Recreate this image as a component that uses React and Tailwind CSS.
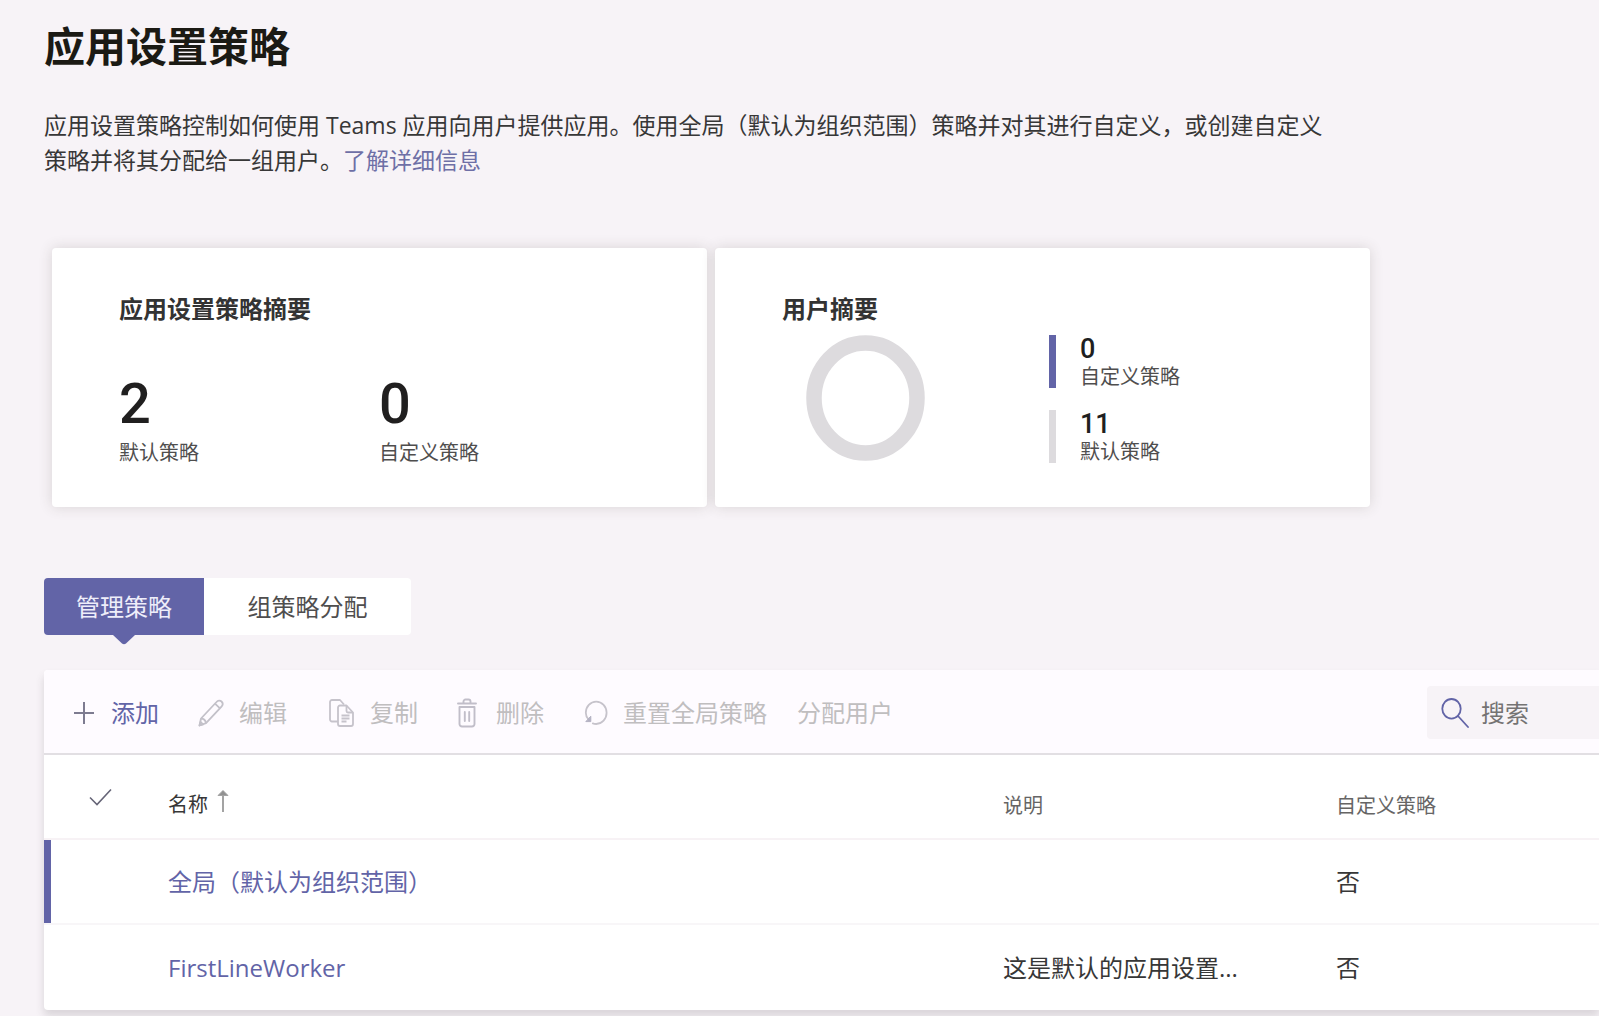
import React, { useState } from 'react';

const PencilIcon = () => (
  <svg width="26" height="28" viewBox="0 0 26 28" fill="none" stroke="#c3c1c9" strokeWidth="1.8" strokeLinejoin="round" aria-hidden="true">
    <path d="M1.5 26.5 3 19.5 18.5 3C20 1.3 22 1 23.5 2.5S25 6 23.5 7.6L8 24.2Z" />
    <path d="M3 19.5c2.6.2 4.6 2 5 4.7M17 4.6l5 4.7M1.5 26.5l1-3.6 2.6 2.6z" />
  </svg>
);

const CopyIcon = () => (
  <svg width="26" height="28" viewBox="0 0 26 28" fill="none" stroke="#c6c3cb" strokeWidth="1.8" strokeLinejoin="round" aria-hidden="true">
    <path d="M9 22.5H3a2 2 0 0 1-2-2V3a2 2 0 0 1 2-2h8l4 4.5" />
    <path d="M9 8.5a2 2 0 0 1 2-2h6.5l6.5 7V25a2 2 0 0 1-2 2H11a2 2 0 0 1-2-2Z" />
    <path d="M17.5 6.5V12a1.5 1.5 0 0 0 1.5 1.5h5M12.5 16.5h8M12.5 19.5h8M12.5 22.5h5" />
  </svg>
);

const TrashIcon = () => (
  <svg width="20" height="30" viewBox="0 0 20 30" fill="none" stroke="#c1bec9" strokeWidth="1.9" strokeLinecap="round" strokeLinejoin="round" aria-hidden="true">
    <path d="M1 5.5h18M6.5 5V3.5a2 2 0 0 1 2-2h3a2 2 0 0 1 2 2V5" />
    <path d="M2.5 9h15v17a2.5 2.5 0 0 1-2.5 2.5H5A2.5 2.5 0 0 1 2.5 26ZM7.8 14v9M12.2 14v9" />
  </svg>
);

const ResetIcon = () => (
  <svg width="24" height="28" viewBox="0 0 24 28" fill="none" stroke="#c6c3cb" strokeWidth="1.8" strokeLinecap="round" aria-hidden="true">
    <path d="M4.6 20.6C2.8 18.8 1.8 16.500 1.8 13.800 1.8 7.600 6.400 2.600 12.200 2.600S22.600 7.600 22.600 13.800 18 25 12.200 25c-1.200 0-2.400-.2-3.400-.6" />
    <path d="M2.200 22.600h4.600v-5Z" fill="#b3b1c2" stroke="#b3b1c2" strokeWidth="1" />
  </svg>
);

const PlusIcon = () => (
  <svg width="22" height="22" viewBox="0 0 22 22" fill="none" stroke="#7d7b90" strokeWidth="2" aria-hidden="true">
    <path d="M11 0v22M1 11h20" />
  </svg>
);

const SearchIcon = () => (
  <svg width="28" height="30" viewBox="0 0 28 30" fill="none" stroke="#6264a7" strokeWidth="1.8" strokeLinecap="round" aria-hidden="true">
    <ellipse cx="10.5" cy="10.8" rx="9.2" ry="9.8" />
    <path d="m17 18 10 11" />
  </svg>
);

const ACTIONS = [
  { label: '编辑', icon: PencilIcon, className: 'w-[89px] ml-[39px]' },
  { label: '复制', icon: CopyIcon, className: 'w-[89px] ml-[42px]' },
  { label: '删除', icon: TrashIcon, className: 'w-[87px] ml-[39px]' },
  { label: '重置全局策略', icon: ResetIcon, className: 'w-[183px] ml-[40px]' },
  { label: '分配用户', icon: null, className: 'ml-[30px]' },
];

const POLICIES = [
  { name: '全局（默认为组织范围）', description: '', custom: '否' },
  { name: 'FirstLineWorker', description: '这是默认的应用设置...', custom: '否' },
];

const TABS = ['管理策略', '组策略分配'];

const CARD = 'flex-1 h-[259px] bg-white rounded-[4px] pl-[67px] pt-[43px] shadow-[0_0_14px_rgba(60,55,45,0.16)]';

const Stat = ({ value, label }) => (
  <div className="w-[260px]">
    <div className="font-['Roboto',sans-serif] text-[56px] leading-[68px] font-medium text-[#201f1f]">{value}</div>
    <div className="text-xl leading-[30px] text-[#4f4e4e]">{label}</div>
  </div>
);

const Legend = ({ value, label, barClass }) => (
  <div className="flex h-[53px]">
    <div className={`w-[7px] ${barClass}`} />
    <div className="pl-6">
      <div className="font-['Roboto',sans-serif] text-[27px] leading-[28px] font-medium text-[#201f1f]">{value}</div>
      <div className="text-xl leading-[27px] text-[#4f4e4e]">{label}</div>
    </div>
  </div>
);

const App = () => {
  const [tab, setTab] = useState(TABS[0]);
  const [query, setQuery] = useState('');

  return (
    <div className="min-h-screen bg-white pr-[9px] font-['Open_Sans','Noto_Sans_CJK_SC',sans-serif]">
      <main className="min-h-screen bg-[#f7f3f7] pl-[44px] pt-[16px] pb-[6px] overflow-hidden">
        <h1 className="text-[41px] leading-[60px] font-bold text-[#1b1a14]">应用设置策略</h1>

        <p className="mt-[32px] max-w-[1316px] text-[23px] leading-[35px] text-[#373737]">
          应用设置策略控制如何使用 Teams 应用向用户提供应用。使用全局（默认为组织范围）策略并对其进行自定义，或创建自定义
          <br />
          策略并将其分配给一组用户。
          <a href="#learn-more" className="text-[#6e6fa6] hover:underline">了解详细信息</a>
        </p>

        <div className="mt-[70px] ml-2 flex max-w-[1318px] gap-2">
          <section className={CARD}>
            <h2 className="text-2xl leading-[36px] font-bold text-[#333333]">应用设置策略摘要</h2>
            <div className="mt-[43px] flex">
              <Stat value="2" label="默认策略" />
              <Stat value="0" label="自定义策略" />
            </div>
          </section>

          <section className={CARD}>
            <h2 className="text-2xl leading-[36px] font-bold text-[#333333]">用户摘要</h2>
            <div className="mt-2 flex">
              <svg className="ml-6" width="119" height="126" viewBox="0 0 119 126" fill="none" role="img" aria-label="用户摘要">
                <ellipse cx="59.5" cy="63" rx="51.5" ry="55" stroke="#dddbde" strokeWidth="15.5" />
              </svg>
              <div className="ml-[124px] flex flex-col gap-[22px]">
                <Legend value="0" label="自定义策略" barClass="bg-[#6264a7]" />
                <Legend value="11" label="默认策略" barClass="bg-[#dddbde]" />
              </div>
            </div>
          </section>
        </div>

        <div role="tablist" className="mt-[71px] flex h-[57px]">
          {TABS.map((name) => (
            <button
              key={name}
              type="button"
              role="tab"
              aria-selected={tab === name}
              onClick={() => setTab(name)}
              className={`relative text-2xl leading-[36px] first:w-[160px] last:w-[207px] first:rounded-l-[4px] last:rounded-r-[4px] ${
                tab === name ? 'bg-[#6264a7] text-[#eeeefa]' : 'bg-white text-[#4f4e4e]'
              }`}
            >
              {name}
              {tab === name && (
                <svg className="absolute left-1/2 top-full -translate-x-1/2" width="22" height="10" viewBox="0 0 22 10" aria-hidden="true">
                  <path d="M0 0h22l-9 8.5q-2 1.5-4 0Z" fill="#6264a7" />
                </svg>
              )}
            </button>
          ))}
        </div>

        <section className="mt-[35px] rounded-l-[4px] bg-white shadow-[0_6px_8px_rgba(60,55,65,0.16)]">
          <div className="flex h-[85px] items-center rounded-tl-[4px] border-b-2 border-[#e2dfe3] bg-[#fefbff] pt-[2px] pl-[29px]">
            <button type="button" className="flex items-center gap-4 text-2xl leading-[36px] text-[#6264a7] whitespace-nowrap">
              <PlusIcon />
              添加
            </button>
            {ACTIONS.map(({ label, icon: Icon, className }) => (
              <button
                key={label}
                type="button"
                disabled
                className={`flex items-center justify-between text-2xl leading-[36px] text-[#c0bebf] whitespace-nowrap ${className}`}
              >
                {Icon && <Icon />}
                {label}
              </button>
            ))}
            <label className="ml-auto flex h-[53px] w-[172px] items-center gap-3 rounded-l-[4px] bg-[#f7f3f7] pl-[14px]">
              <SearchIcon />
              <input
                type="search"
                aria-label="搜索"
                placeholder="搜索"
                value={query}
                onChange={(e) => setQuery(e.target.value)}
                className="min-w-0 flex-1 bg-transparent text-2xl leading-[36px] text-[#373737] placeholder:text-[#757373] outline-none"
              />
            </label>
          </div>

          <table className="w-full table-fixed border-separate border-spacing-0 text-left">
            <thead>
              <tr className="h-[85px] text-xl leading-[30px] text-[#666565]">
                <th className="w-[124px] border-b-2 border-[#f7f2f5] pl-[45px] font-normal">
                  <button type="button" aria-label="全选" className="block">
                    <svg width="24" height="18" viewBox="0 0 24 18" fill="none" stroke="#666577" strokeWidth="1.6" aria-hidden="true">
                      <path d="m1 9.5 7 7L22 1.5" />
                    </svg>
                  </button>
                </th>
                <th className="w-[835px] border-b-2 border-[#f7f2f5] pt-4 font-normal text-[#373737]">
                  <button type="button" className="flex items-start gap-2">
                    名称
                    <svg width="14" height="24" viewBox="0 0 14 24" fill="none" stroke="#a3a3a3" strokeWidth="2" aria-hidden="true">
                      <path d="M7 1v21" />
                      <path d="m2 5.5 5-5 5 5Z" fill="#919191" strokeWidth="1" />
                    </svg>
                  </button>
                </th>
                <th className="w-[333px] border-b-2 border-[#f7f2f5] pt-[18px] font-normal">说明</th>
                <th className="border-b-2 border-[#f7f2f5] pt-[18px] font-normal">自定义策略</th>
              </tr>
            </thead>
            <tbody className="text-2xl leading-[36px] text-[#373737]">
              {POLICIES.map((policy, i) => (
                <tr key={policy.name} className="group h-[85px]">
                  <td className="group-first:border-b-2 border-[#f8f6f8]">
                    {i === 0 && <div className="h-[83px] w-[7px] bg-[#6264a7]" />}
                  </td>
                  <td className="group-first:border-b-2 border-[#f8f6f8]">
                    <a href="#policy" className="text-[#6264a7] hover:underline">{policy.name}</a>
                  </td>
                  <td className="group-first:border-b-2 border-[#f8f6f8] truncate">{policy.description}</td>
                  <td className="group-first:border-b-2 border-[#f8f6f8]">{policy.custom}</td>
                </tr>
              ))}
            </tbody>
          </table>
        </section>
      </main>
    </div>
  );
};

export default App;
